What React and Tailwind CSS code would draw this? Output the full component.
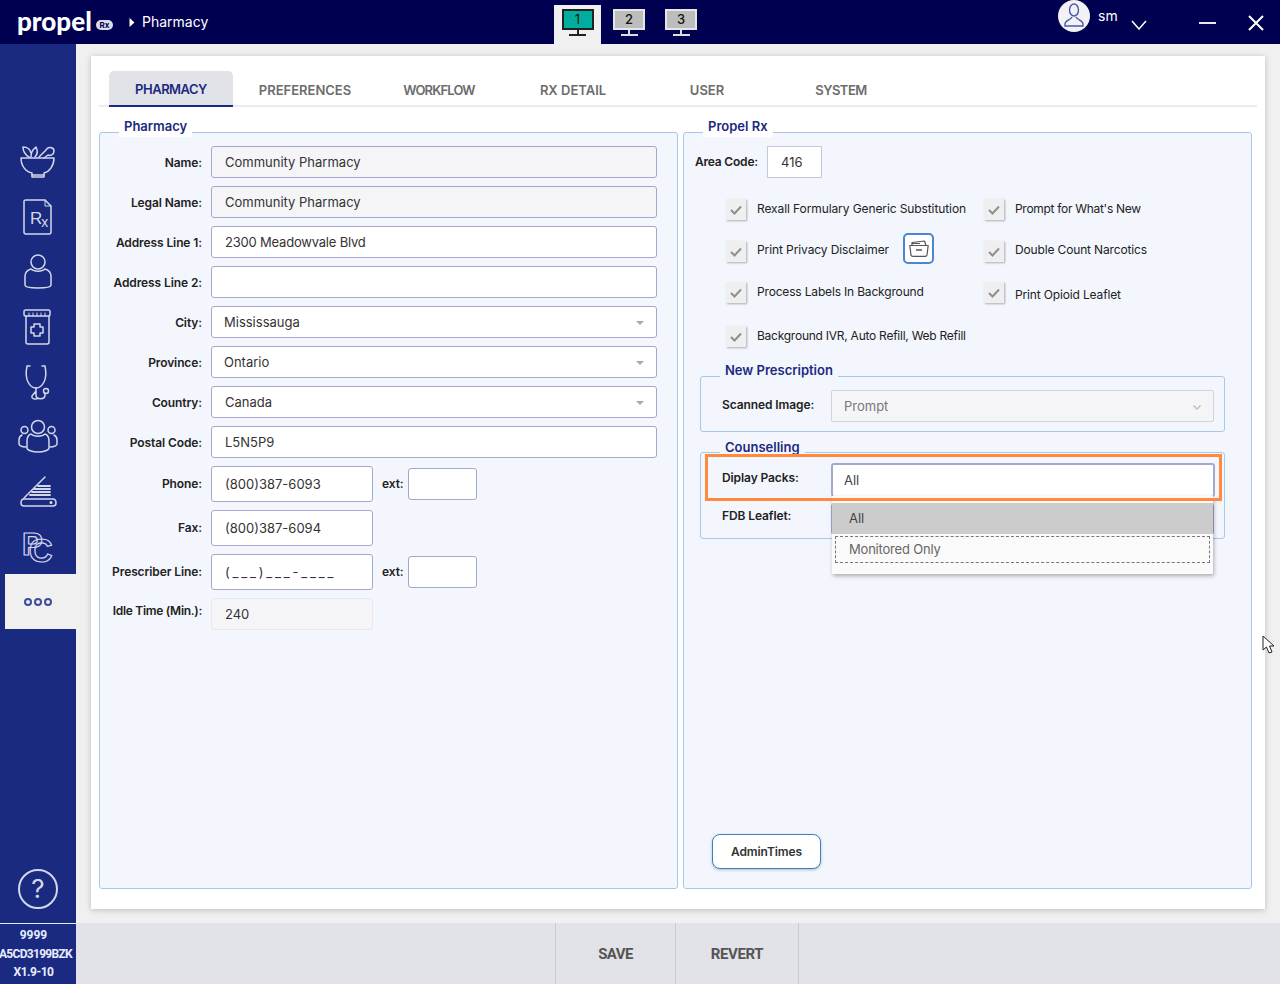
import React from 'react';

const ICON = '#d3d7ea';

function Svg({ children, size = 40, className = '' }) {
  return (
    <svg className={className} width={size} height={size} viewBox="0 0 40 40" fill="none" stroke={ICON} strokeWidth="1.5" strokeLinecap="round" strokeLinejoin="round">
      {children}
    </svg>
  );
}

const sideIcons = [
  <Svg key="m">
    <g transform="translate(0 3)">
      <path d="M3 13 H36 C36 21 31 27 26 28 V32 H14 V28 C8 27 3 21 3 13 Z" />
      <path d="M14 30 H26" />
      <path d="M11 12 C6 9 5 6 5 2 C9 2 12 4 13 8 M13 12 C13 8 14 5 18 2 C20 6 19 10 17 12" />
      <path d="M21 12 L28 5 C30 1 36 2 36 6 C36 10 32 11 30 10 L26 13" />
    </g>
  </Svg>,
  <Svg key="r">
    <path d="M8 3 H27 L33 9 V35 C33 36 32 37 31 37 H8 C7 37 6 36 6 35 V4 C6 3.500 7 3 8 3 Z" />
    <path d="M27 3 V9 H33" strokeWidth="1" />
    <text x="12" y="27" fontFamily="Liberation Sans" fontSize="17" fill={ICON} stroke="none">R<tspan dx="-1" dy="3" fontSize="14">x</tspan></text>
  </Svg>,
  <Svg key="p">
    <circle cx="20" cy="10" r="7" />
    <path d="M13 17 C10 18 7 20 7 24 V33 C7 35 12 36 20 36 C28 36 33 35 33 33 V24 C33 20 30 18 27 17 C24 20 16 20 13 17 Z" />
  </Svg>,
  <Svg key="j">
    <rect x="6" y="3" width="26" height="6" rx="1.500" />
    <path d="M8 9 V35 C8 36 9 37 10 37 H29 C30 37 31 36 31 35 V9" />
    <path d="M11 6 V9 M15 6 V9 M19 6 V9 M23 6 V9 M27 6 V9" strokeWidth="1" />
    <path d="M16 17 H22 V20 H25 V26 H22 V29 H16 V26 H13 V20 H16 Z" />
  </Svg>,
  <Svg key="s">
    <path d="M12 4 H9 C8 9 7 14 10 20 C12 24 15 26 18 26 C21 26 24 24 26 20 C29 14 28 9 27 4 H24" />
    <path d="M18 26 V33 C18 38 27 38 27 33 V31 M18 29 L14 34 C13 37 18 38 20 36" />
    <circle cx="28" cy="29" r="2.500" />
  </Svg>,
  <Svg key="g">
    <circle cx="20" cy="10" r="6.500" />
    <path d="M13 17 C10 18 9 20 9 24 V31 C9 33 14 35 20 35 C26 35 31 33 31 31 V24 C31 20 30 18 27 17 C24 20 16 20 13 17 Z" />
    <circle cx="6.500" cy="13" r="3.500" />
    <circle cx="33.500" cy="13" r="3.500" />
    <path d="M4 18 C2 19 1 21 1 23 V27 C1 28 3 30 8 30 M36 18 C38 19 39 21 39 23 V27 C39 28 37 30 32 30" />
  </Svg>,
  <Svg key="sc">
    <g transform="translate(0 -2)">
      <path d="M6 28 L27 7" />
      <path d="M5 29 H35 C37 29 38 31 38 33 C38 35 37 36 35 36 H6 C4 36 3 35 3 33 C3 31 4 29 6 29 Z" />
      <path d="M16 19 H32 M14 22 H32 M12 25 H32 M20 16 H32" strokeWidth="1.800" />
      <circle cx="33" cy="32.500" r="0.800" fill={ICON} />
    </g>
  </Svg>,
  <svg key="pc" className="overflow-visible" width="40" height="40" viewBox="0 0 40 40" fill="none">
    <text x="4" y="28" fontFamily="Liberation Sans" fontWeight="700" fontSize="31" stroke={ICON} strokeWidth="1.200" fill="none">P<tspan dx="-14" dy="7" fontSize="33">C</tspan></text>
  </svg>,
];

function Monitor({ n, active }) {
  return (
    <div className={active ? 'flex h-[39px] w-[47px] justify-center bg-[#f0f0f0] pt-[4px]' : 'flex h-[39px] w-[52px] justify-center pt-[4px]'}>
      <div className="flex flex-col items-center">
        <div className={active
          ? 'flex h-[21px] w-[32px] items-center justify-center border-2 border-[#222] bg-[#00ad9f] text-[13px] leading-none text-[#111]'
          : 'flex h-[21px] w-[32px] items-center justify-center border-2 border-[#e6e6e6] bg-[#bdbdbd] text-[13px] font-medium leading-none text-[#111]'}>
          {n}
        </div>
        <div className={active ? 'h-[4px] w-[2px] bg-[#222]' : 'h-[4px] w-[2px] bg-[#ddd]'} />
        <div className={active ? 'h-[2px] w-[17px] bg-[#222]' : 'h-[2px] w-[17px] bg-[#ddd]'} />
      </div>
    </div>
  );
}

function TopBar() {
  return (
    <div className="flex h-[44px] items-start bg-[#000050] text-white">
      <div className="flex h-[44px] w-[554px] items-center pl-[17px]">
        <span className="w-[76px] whitespace-nowrap pb-[2px] font-['Lato'] text-[26px] font-black leading-none">propel</span>
        <span className="ml-[3px] mt-[6px] flex h-[10px] w-[17px] items-center justify-center rounded-full bg-[#dcdce6] text-[8px] font-bold leading-none text-[#000050]">Rx</span>
        <svg className="ml-[16px]" width="6" height="9" viewBox="0 0 6 9"><path d="M0.500 0 L5.500 4.500 L0.500 9 Z" fill="#fff" /></svg>
        <span className="ml-[7px] pb-[2px] text-[14px]">Pharmacy</span>
      </div>
      <div className="flex items-start pt-[5px]">
        <Monitor n="1" active />
        <div className="w-[2px]" />
        <Monitor n="2" />
        <Monitor n="3" />
      </div>
      <div className="ml-[351px] flex h-[32px] w-[32px] items-center justify-center rounded-full bg-[#f2f2f6]">
        <svg width="24" height="28" viewBox="0 0 24 28" fill="none" stroke="#4a5aa8" strokeWidth="1.400">
          <ellipse cx="12" cy="8" rx="4.500" ry="6" />
          <path d="M10 15 C9 18 3 18 3 22 V24 H21 V22 C21 18 15 18 14 15" />
        </svg>
      </div>
      <span className="ml-[8px] mt-[7px] text-[14px] leading-[18px]">sm</span>
      <svg className="ml-[13px] mt-[20px]" width="16" height="10" viewBox="0 0 16 10" fill="none" stroke="#fff" strokeWidth="1.500"><path d="M1 1 L8 9 L15 1" /></svg>
      <div className="ml-[52px] mt-[22px] h-[2px] w-[17px] bg-[#e8e8ee]" />
      <svg className="ml-[32px] mt-[15px]" width="16" height="16" viewBox="0 0 16 16" fill="none" stroke="#fff" strokeWidth="2"><path d="M1 1 L15 15 M15 1 L1 15" /></svg>
    </div>
  );
}

function Sidebar() {
  return (
    <div className="flex w-[76px] flex-col bg-[#1a2a80] pt-[90px]">
      {sideIcons.map((ic, i) => (
        <div key={i} className="flex h-[55px] items-center justify-center">{ic}</div>
      ))}
      <div className="ml-[5px] flex h-[55px] items-center justify-center gap-[2px] bg-[#f0f0f0] pr-[5px]">
        {[0, 1, 2].map((i) => (
          <span key={i} className="h-[8px] w-[8px] rounded-full border-2 border-[#3e4c9c]" />
        ))}
      </div>
      <div className="mt-auto flex justify-center pb-[14px]">
        <div className="flex h-[40px] w-[40px] items-center justify-center rounded-full border-2 border-[#d3d7ea] text-[26px] leading-none text-[#d3d7ea]">?</div>
      </div>
      <div className="flex h-[61px] flex-col items-center border-t border-[#e8e8f2] pr-[5px] pt-[2px] font-['Roboto'] text-[12px] font-bold leading-[18.500px] text-[#e8ecff]">
        <span className="pr-[4px]">9999</span>
        <span className="whitespace-nowrap tracking-[-0.7px]">A5CD3199BZK</span>
        <span className="pr-[4px] tracking-[-0.5px]">X1.9-10</span>
      </div>
    </div>
  );
}

const tabs = [
  ['PHARMACY', 'tracking-[-0.5px]'],
  ['PREFERENCES', ''],
  ['WORKFLOW', 'tracking-[-0.85px]'],
  ['RX DETAIL', ''],
  ['USER', ''],
  ['SYSTEM', 'tracking-[-0.5px]'],
];

function Tabs() {
  return (
    <div className="flex h-[36px] border-b-2 border-[#ececef] pl-[5px]">
      {tabs.map(([t, tr], i) => (
        <div key={t} className="flex h-[36px] w-[134px] justify-center">
          <div className={i === 0
            ? `flex h-[36px] w-[124px] items-center justify-center rounded-t-[5px] border-b-[2px] border-[#1a2a80] bg-[#e2e3e8] pt-[4px] text-[13px] font-semibold text-[#1a2a80] ${tr}`
            : `flex h-[36px] items-center justify-center pt-[3px] text-[13px] font-semibold text-[#6c6c6c] ${tr}`}>
            {t}
          </div>
        </div>
      ))}
    </div>
  );
}

function Legend({ children, white, className = '' }) {
  return (
    <div className={`-mt-[14px] ml-[19px] h-[18px] w-fit px-[5px] text-[13px] font-semibold leading-[14px] text-[#1a2a80] ${white ? 'bg-white' : 'bg-[#f3f6fc]'} ${className}`}>
      {children}
    </div>
  );
}

function Field({ children, className = '', disabled, pl = 'pl-[13px]' }) {
  return (
    <div className={`flex items-center rounded-[3px] border pt-[2px] text-[13px] text-[#333] ${pl} ${disabled ? 'bg-[#f5f5f8] border-[#a5a8cd]' : 'bg-white border-[#a5a8cd]'} ${className}`}>
      {children}
    </div>
  );
}

function Caret() {
  return <span className="ml-auto mr-[12px] h-0 w-0 border-x-[4px] border-t-[4px] border-x-transparent border-t-[#aaa]" />;
}

function Row({ label, children, h = 'h-[32px]', labelClass = 'pt-[2px] tracking-[-0.1px]' }) {
  return (
    <div className={`flex items-center gap-[9px] ${h}`}>
      <div className={`w-[102px] shrink-0 whitespace-nowrap text-right text-[12px] font-semibold text-[#222] ${labelClass}`}>{label}</div>
      {children}
    </div>
  );
}

function Ext() {
  return <span className="-mr-[5px] w-[22px] text-[12px] font-semibold tracking-[-0.1px] text-[#222]">ext:</span>;
}

function LeftPanel() {
  return (
    <div className="flex h-[757px] w-[579px] flex-col rounded-[3px] border border-[#a8c8ea] bg-[#f3f6fc]">
      <Legend white>Pharmacy</Legend>
      <div className="mt-[9px] flex flex-col gap-[8px] pr-[20px]">
        <Row label="Name:"><Field disabled className="h-[32px] flex-1">Community Pharmacy</Field></Row>
        <Row label="Legal Name:"><Field disabled className="h-[32px] flex-1">Community Pharmacy</Field></Row>
        <Row label="Address Line 1:"><Field className="h-[32px] flex-1 tracking-[-0.2px]">2300 Meadowvale Blvd</Field></Row>
        <Row label="Address Line 2:"><Field className="h-[32px] flex-1" /></Row>
        <Row label="City:"><Field pl="pl-[12px]" className="h-[32px] flex-1">Mississauga<Caret /></Field></Row>
        <Row label="Province:"><Field pl="pl-[12px]" className="h-[32px] flex-1">Ontario<Caret /></Field></Row>
        <Row label="Country:"><Field className="h-[32px] flex-1">Canada<Caret /></Field></Row>
        <Row label="Postal Code:"><Field className="h-[32px] flex-1">L5N5P9</Field></Row>
        <Row label="Phone:" h="h-[36px]" labelClass="tracking-[-0.1px]">
          <Field className="h-[36px] w-[162px]">(800)387-6093</Field>
          <Ext />
          <Field className="h-[32px] w-[69px]" />
        </Row>
        <Row label="Fax:" h="h-[36px]" labelClass="tracking-[-0.1px]"><Field className="h-[36px] w-[162px]">(800)387-6094</Field></Row>
        <Row label="Prescriber Line:" h="h-[36px]" labelClass="tracking-[-0.1px]">
          <Field className="h-[36px] w-[162px] tracking-[2.8px]">(___)___-____</Field>
          <Ext />
          <Field className="h-[32px] w-[69px]" />
        </Row>
        <Row label="Idle Time (Min.):" labelClass="pb-[6px] tracking-[-0.3px]">
          <div className="flex h-[32px] w-[162px] items-center rounded-[3px] border border-[#e8e8ee] bg-[#f5f5f8] pl-[13px] pt-[2px] text-[13px] text-[#333]">240</div>
        </Row>
      </div>
    </div>
  );
}

function Check({ children, textClass = 'pb-[2px] tracking-[-0.1px]' }) {
  return (
    <div className="flex items-center gap-[11px]">
      <div className="flex h-[21px] w-[20px] shrink-0 items-center justify-center bg-[#efefef] shadow-[1px_1px_2px_rgba(0,0,0,0.3)]">
        <svg width="12" height="10" viewBox="0 0 12 10" fill="none" stroke="#8f8f8f" strokeWidth="2"><path d="M1 5 L4.500 8.500 L11 1.500" /></svg>
      </div>
      <span className={`whitespace-nowrap text-[12px] text-[#222] ${textClass}`}>{children}</span>
    </div>
  );
}

function RightPanel() {
  return (
    <div className="flex h-[757px] w-[569px] flex-col rounded-[3px] border border-[#a8c8ea] bg-[#f3f6fc]">
      <Legend white>Propel Rx</Legend>
      <div className="mt-[9px] flex h-[32px] items-center pl-[11px]">
        <span className="w-[72px] text-[12px] font-semibold tracking-[-0.2px] text-[#222]">Area Code:</span>
        <div className="flex h-[32px] w-[55px] items-center border border-[#c4c8dc] bg-white pl-[13px] pt-[1px] text-[13px] text-[#333]">416</div>
      </div>

      <div className="mt-[21px] ml-[42px] flex flex-col">
        <div className="flex h-[21px]">
          <div className="w-[258px]"><Check>Rexall Formulary Generic Substitution</Check></div>
          <Check textClass="pb-[2px] tracking-[-0.3px]">Prompt for What's New</Check>
        </div>
        <div className="mt-[21px] flex h-[21px]">
          <div className="flex w-[258px] items-center">
            <Check textClass="pb-[4px] tracking-[-0.1px]">Print Privacy Disclaimer</Check>
            <div className="-mt-[6px] ml-[14px] flex h-[31px] w-[31px] shrink-0 items-center justify-center rounded-[5px] border-2 border-[#4a86d0] bg-white">
              <svg width="20" height="17" viewBox="0 0 20 17" fill="none" stroke="#555" strokeWidth="1.200" strokeLinejoin="round">
                <path d="M0.800 5.500 H19.200 L18 15 C18 16 17 16.400 16 16.400 H4 C3 16.400 2 16 2 15 Z" />
                <path d="M3 5.500 V2.500 L15.500 1 L17 5.500 M3 3.500 H11" />
                <path d="M7 10 H13" strokeWidth="1.500" />
              </svg>
            </div>
          </div>
          <Check textClass="pb-[4px] tracking-[-0.15px]">Double Count Narcotics</Check>
        </div>
        <div className="mt-[20px] flex h-[21px]">
          <div className="w-[258px]"><Check textClass="pb-[2px] tracking-[-0.17px]">Process Labels In Background</Check></div>
          <Check textClass="pt-[4px] tracking-[-0.15px]">Print Opioid Leaflet</Check>
        </div>
        <div className="mt-[23px] flex h-[21px]">
          <Check textClass="pb-[2px] tracking-[-0.25px]">Background IVR, Auto Refill, Web Refill</Check>
        </div>
      </div>

      <div className="ml-[16px] mt-[29px] h-[56px] w-[525px] rounded-[3px] border border-[#a8c8ea]">
        <Legend>New Prescription</Legend>
        <div className="mt-[9px] flex items-center pl-[21px]">
          <span className="w-[109px] shrink-0 pb-[2px] text-[12px] font-semibold tracking-[-0.1px] text-[#222]">Scanned Image:</span>
          <div className="flex h-[32px] w-[383px] items-center rounded-[2px] border border-[#d0d2dc] bg-[#f5f5f8] pl-[12px] pt-[2px] text-[13px] text-[#777]">
            Prompt
            <svg className="ml-auto mr-[12px]" width="8" height="5" viewBox="0 0 8 5" fill="none" stroke="#bbb" strokeWidth="1.300"><path d="M0.500 0.500 L4 4 L7.500 0.500" /></svg>
          </div>
        </div>
      </div>

      <div className="relative ml-[16px] mt-[20px] h-[87px] w-[525px] rounded-[3px] border border-[#a8c8ea]">
        <Legend className="pt-[1px]">Counselling</Legend>
        <div className="mt-[6px] flex items-center pl-[21px]">
          <span className="w-[109px] shrink-0 pb-[4px] text-[12px] font-semibold tracking-[-0.1px] text-[#222]">Diplay Packs:</span>
          <div className="flex h-[34px] w-[384px] items-center rounded-[3px] border-2 border-b border-[#a5a8cd] bg-white pl-[11px] text-[13px] text-[#444]">All</div>
        </div>
        <div className="mt-[6px] flex items-center pl-[21px]">
          <span className="w-[109px] shrink-0 pb-[6px] text-[12px] font-semibold tracking-[-0.1px] text-[#222]">FDB Leaflet:</span>
          <div className="h-[32px] w-[383px] rounded-[3px] border border-[#a5a8cd] bg-white" />
        </div>

        <div className="absolute left-[131px] top-[43px] flex h-[78px] w-[381px] flex-col bg-[#fafafa] shadow-[1px_2px_4px_rgba(0,0,0,0.3)]">
          <div className="mt-[7px] flex h-[31px] items-center bg-[#cccccc] pl-[17px] text-[13px] text-[#444]">All</div>
          <div className="mx-[3px] mt-[2px] flex h-[27px] items-center border border-dashed border-[#777] pl-[13px] text-[13px] tracking-[-0.2px] text-[#666]">Monitored Only</div>
        </div>

        <div className="absolute left-[4px] top-[1px] h-[47px] w-[517px] border-[3px] border-[#ff8a3c]" />
      </div>

      <div className="ml-[28px] mt-auto mb-[19px] flex h-[35px] w-[109px] items-center justify-center rounded-[8px] border border-[#3a80c4] bg-white text-[12px] font-semibold tracking-[-0.1px] text-[#333] shadow-[0_1px_3px_rgba(0,0,0,0.25)]">
        AdminTimes
      </div>
    </div>
  );
}

function BottomBar() {
  return (
    <div className="flex h-[61px] bg-[#e2e3e8] pl-[479px] font-['Roboto'] text-[15px] font-bold text-[#555]">
      <div className="flex w-[120px] items-center justify-center border-l border-[#c9cad6] pt-[2px]"><span className="tracking-[-0.6px]">SAVE</span></div>
      <div className="flex w-[124px] items-center justify-center border-x border-[#c9cad6] pt-[2px]"><span className="tracking-[-0.4px]">REVERT</span></div>
    </div>
  );
}

export default function App() {
  return (
    <div className="relative flex h-[984px] w-[1280px] flex-col overflow-hidden bg-[#f0f0f0] font-['Inter',sans-serif]">
      <TopBar />
      <div className="flex h-[940px]">
        <Sidebar />
        <div className="flex w-[1204px] flex-col">
          <div className="flex-1 px-[15px] pt-[12px]">
            <div className="h-[853px] bg-white pl-[8px] pr-[8px] pt-[15px] shadow-[0_1px_6px_rgba(0,0,0,0.22)]">
              <Tabs />
              <div className="mt-[25px] flex gap-[5px]">
                <LeftPanel />
                <RightPanel />
              </div>
            </div>
          </div>
          <BottomBar />
        </div>
      </div>
      <svg className="absolute left-[1262px] top-[635px]" width="14" height="20" viewBox="0 0 14 20" fill="#fff" stroke="#222" strokeWidth="1"><path d="M1 1 V15 L4.500 12 L7 18 L10 17 L7.500 11 L12 11 Z" /></svg>
    </div>
  );
}
